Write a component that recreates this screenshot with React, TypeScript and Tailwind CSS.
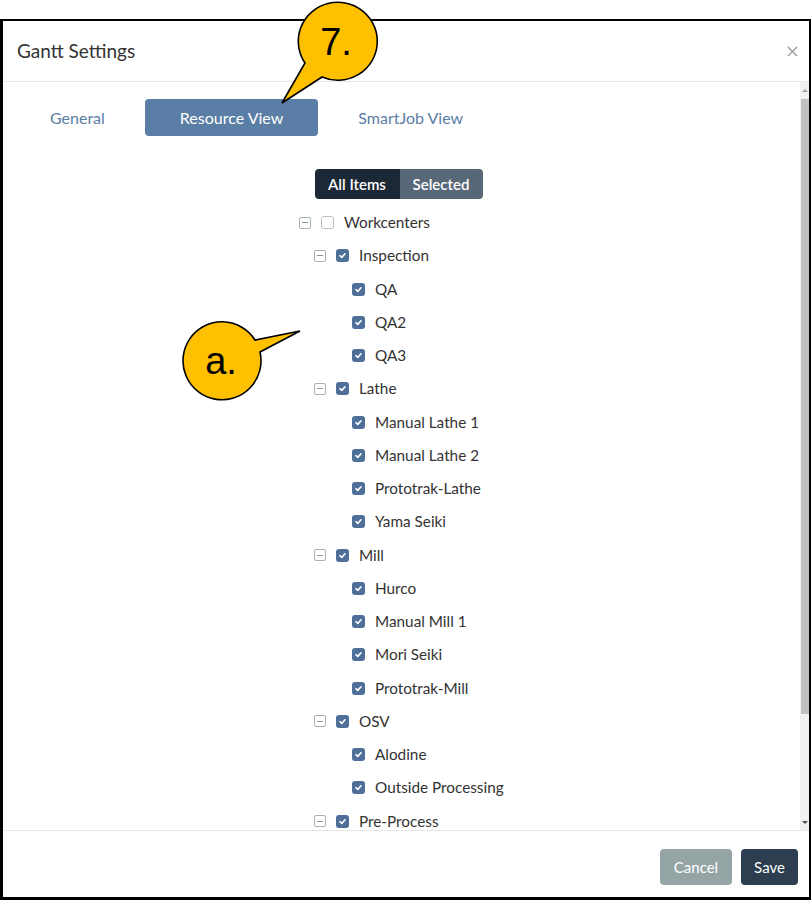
import React from "react";

type Node = { label: string; level: number; group?: boolean; checked: boolean };

const tree: Node[] = [
  { label: "Workcenters", level: 0, group: true, checked: false },
  { label: "Inspection", level: 1, group: true, checked: true },
  { label: "QA", level: 2, checked: true },
  { label: "QA2", level: 2, checked: true },
  { label: "QA3", level: 2, checked: true },
  { label: "Lathe", level: 1, group: true, checked: true },
  { label: "Manual Lathe 1", level: 2, checked: true },
  { label: "Manual Lathe 2", level: 2, checked: true },
  { label: "Prototrak-Lathe", level: 2, checked: true },
  { label: "Yama Seiki", level: 2, checked: true },
  { label: "Mill", level: 1, group: true, checked: true },
  { label: "Hurco", level: 2, checked: true },
  { label: "Manual Mill 1", level: 2, checked: true },
  { label: "Mori Seiki", level: 2, checked: true },
  { label: "Prototrak-Mill", level: 2, checked: true },
  { label: "OSV", level: 1, group: true, checked: true },
  { label: "Alodine", level: 2, checked: true },
  { label: "Outside Processing", level: 2, checked: true },
  { label: "Pre-Process", level: 1, group: true, checked: true },
];

const indent = ["pl-0", "pl-[15px]", "pl-[31px]"];

function Expander() {
  return (
    <span className="w-[12px] h-[12px] border border-[#a7b0b0] rounded-[2px] flex items-center justify-center">
      <span className="w-[6px] h-px bg-[#8e9898]" />
    </span>
  );
}

function Checkbox({ checked }: { checked: boolean }) {
  if (!checked) {
    return <span className="w-[13px] h-[13px] rounded-[3px] border border-[#bdbdbd] bg-white" />;
  }
  return (
    <span className="w-[13px] h-[13px] rounded-[3px] bg-[#4d6f98] flex items-center justify-center">
      <svg width="9" height="9" viewBox="0 0 9 9">
        <path d="M2 4.7 L3.8 6.4 L7 2.8" fill="none" stroke="white" strokeWidth="1.6" strokeLinecap="round" strokeLinejoin="round" />
      </svg>
    </span>
  );
}

function TreeRow({ node }: { node: Node }) {
  return (
    <div className={`h-[33.25px] flex items-center ${indent[node.level]}`}>
      {node.group ? <Expander /> : <span className="w-[12px]" />}
      <span className="ml-[10px] flex">
        <Checkbox checked={node.checked} />
      </span>
      <span className="ml-[10px] text-[15.3px] text-[#333]">{node.label}</span>
    </div>
  );
}

function Callouts() {
  return (
    <svg className="absolute left-0 top-0 pointer-events-none" width="811" height="901">
      <path
        d="M305 63 A39.5 39 0 1 1 322 77 L282 103 Z"
        fill="#ffc000"
        stroke="#000"
        strokeWidth="1.6"
        strokeLinejoin="miter"
      />
      <text x="336" y="55" textAnchor="middle" fontSize="38" fontFamily="'Liberation Sans', Arial, sans-serif" fill="#000">
        7.
      </text>
      <path
        d="M255 340 A39 39 0 1 0 260 352 L300 331 Z"
        fill="#ffc000"
        stroke="#000"
        strokeWidth="1.6"
      />
      <text x="221" y="374" textAnchor="middle" fontSize="38" fontFamily="'Liberation Sans', Arial, sans-serif" fill="#000">
        a.
      </text>
    </svg>
  );
}

export default function App() {
  return (
    <div className="relative w-[811px] h-[901px] bg-white pt-[19px] font-['Lato','Noto_Sans',sans-serif] overflow-hidden">
      <div className="h-[881px] border-2 border-l-[3px] border-b-[3px] border-black flex flex-col">
        {/* header */}
        <div className="h-[61px] flex items-center justify-between pl-[14px] pr-[11px] border-b border-[#e6e6e6]">
          <span className="text-[19px] text-[#333]">Gantt Settings</span>
          <svg width="11" height="11" viewBox="0 0 11 11">
            <path d="M1 1 L10 10 M10 1 L1 10" stroke="#9a9a9a" strokeWidth="1.4" />
          </svg>
        </div>

        {/* body */}
        <div className="h-[748px] flex">
          <div className="flex-1 overflow-hidden pt-[17px]">
            <div className="flex gap-[5px] pl-[12px]">
              <button className="h-[37px] px-[35px] rounded-[4px] text-[16px] text-[#5b7ea6]">General</button>
              <button className="h-[37px] px-[35px] rounded-[4px] text-[16px] text-white bg-[#5b7ea6]">Resource View</button>
              <button className="h-[37px] px-[35px] rounded-[4px] text-[16px] text-[#5b7ea6]">SmartJob View</button>
            </div>

            <div className="mt-[33px] flex justify-center pr-[6px]">
              <div className="flex h-[30px] rounded-[4px] overflow-hidden text-[15px] font-semibold text-white">
                <span className="w-[85px] flex items-center justify-center bg-[#1c2835]">All Items</span>
                <span className="w-[83px] flex items-center justify-center bg-[#596878]">Selected</span>
              </div>
            </div>

            <div className="mt-[7px] pl-[296px]">
              {tree.map((n) => (
                <TreeRow key={n.label} node={n} />
              ))}
            </div>
          </div>

          {/* scrollbar */}
          <div className="w-[9px] bg-[#f1f1f1] flex flex-col items-center">
            <div className="h-[17px] flex items-center justify-center">
              <span className="w-0 h-0 border-l-[3px] border-r-[3px] border-b-[3px] border-l-transparent border-r-transparent border-b-[#a3a3a3]" />
            </div>
            <div className="w-[8px] h-[615px] bg-[#c1c1c1]" />
            <div className="flex-1 flex items-end justify-center pb-[6px]">
              <span className="w-0 h-0 border-l-[3px] border-r-[3px] border-t-[3px] border-l-transparent border-r-transparent border-t-[#505050]" />
            </div>
          </div>
        </div>

        {/* footer */}
        <div className="flex-1 border-t border-[#e6e6e6] flex items-start justify-end gap-[9px] pt-[18px] pr-[11px]">
          <button className="h-[36px] w-[72px] rounded-[4px] bg-[#95a5a6] text-white text-[15px] leading-[36px]">Cancel</button>
          <button className="h-[36px] w-[57px] rounded-[4px] bg-[#2c3e50] text-white text-[15px] leading-[36px]">Save</button>
        </div>
      </div>
      <Callouts />
    </div>
  );
}
